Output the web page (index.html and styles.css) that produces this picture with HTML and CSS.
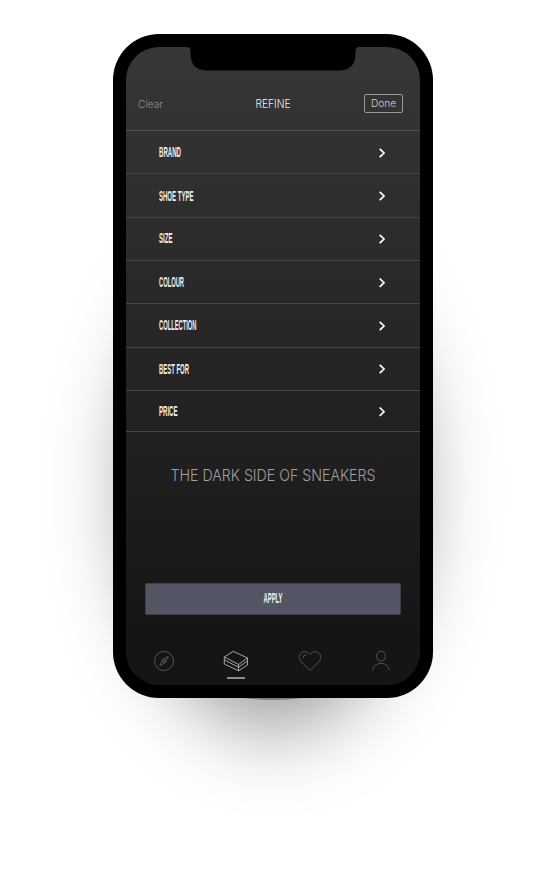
FILE: index.html
```html
<!DOCTYPE html>
<html lang="en">
<head>
<meta charset="utf-8">
<title>Refine</title>
<link rel="stylesheet" href="styles.css">
</head>
<body>
<main class="phone">
  <div class="screen">
    <svg class="notch" width="172" height="24" viewBox="0 0 172 24"><path d="M0 0H172Q168.500 0 168.500 4V6.500Q168.500 23.500 151.500 23.500H20.500Q3.500 23.500 3.500 6.500V4Q3.500 0 0 0Z"/></svg>
    <header class="header">
      <svg class="label clear" width="30" height="18"><text x="0" y="12.500" textLength="25" lengthAdjust="spacingAndGlyphs">Clear</text></svg>
      <svg class="label title" width="40" height="18"><text x="2.500" y="13" textLength="35" lengthAdjust="spacingAndGlyphs">REFINE</text></svg>
      <button class="done"><svg class="label" width="30" height="17"><text x="2" y="12" textLength="25" lengthAdjust="spacingAndGlyphs">Done</text></svg></button>
    </header>
    <ul class="filters">
      <li><svg class="narrow" width="80" height="20"><text y="15" textLength="22" lengthAdjust="spacingAndGlyphs">BRAND</text></svg><svg class="chevron" viewBox="0 0 8 12"><path d="M1.700 1.800L6 6L1.700 10.200"/></svg></li>
      <li><svg class="narrow" width="80" height="20"><text y="14.500" textLength="34.500" lengthAdjust="spacingAndGlyphs">SHOE TYPE</text></svg><svg class="chevron" viewBox="0 0 8 12"><path d="M1.700 1.800L6 6L1.700 10.200"/></svg></li>
      <li><svg class="narrow" width="80" height="20"><text y="14" textLength="13.500" lengthAdjust="spacingAndGlyphs">SIZE</text></svg><svg class="chevron" viewBox="0 0 8 12"><path d="M1.700 .8L6 5L1.700 9.200"/></svg></li>
      <li><svg class="narrow" width="80" height="20"><text y="15" textLength="25" lengthAdjust="spacingAndGlyphs">COLOUR</text></svg><svg class="chevron" viewBox="0 0 8 12"><path d="M1.700 1.500L6 5.700L1.700 9.900"/></svg></li>
      <li><svg class="narrow" width="80" height="20"><text y="15" textLength="37.500" lengthAdjust="spacingAndGlyphs">COLLECTION</text></svg><svg class="chevron" viewBox="0 0 8 12"><path d="M1.700 1.800L6 6L1.700 10.200"/></svg></li>
      <li><svg class="narrow" width="80" height="20"><text y="14.500" textLength="30" lengthAdjust="spacingAndGlyphs">BEST FOR</text></svg><svg class="chevron" viewBox="0 0 8 12"><path d="M1.700 1.800L6 6L1.700 10.200"/></svg></li>
      <li><svg class="narrow" width="80" height="20"><text y="15" textLength="18.500" lengthAdjust="spacingAndGlyphs">PRICE</text></svg><svg class="chevron" viewBox="0 0 8 12"><path d="M1.700 1.500L6 5.700L1.700 9.900"/></svg></li>
    </ul>
    <svg class="label tagline" width="240" height="24"><text x="17.500" y="17.500" textLength="205" lengthAdjust="spacingAndGlyphs">THE DARK SIDE OF SNEAKERS</text></svg>
    <button class="apply"><svg class="narrow" width="50" height="20"><text x="15.500" y="14" textLength="19" lengthAdjust="spacingAndGlyphs">APPLY</text></svg></button>
    <nav class="tabs">
      <svg class="icon compass" width="22" height="22" viewBox="0 0 22 22"><circle cx="11" cy="11" r="9.500"/><path d="M15.300 6.500L9.500 9.500L6.900 15.500L12.600 12.400Z"/><circle cx="11" cy="11" r="1.300"/></svg>
      <span class="active"><svg class="icon box" width="26" height="22" viewBox="0 0 26 22"><path d="M1.300 7L10.300 1.300L24.500 8L15.600 14.500ZM1.300 7V14L15.600 20.800L24.500 15V8M1.300 10L15.600 17.200L24.500 11M15.600 14.500V20.800"/></svg><i class="marker"></i></span>
      <svg class="icon heart" width="24" height="22" viewBox="0 0 24 22"><path d="M12 20.500L3.200 11.700C.8 9.300.8 6 2.500 3.800C5 .8 9.500.9 12 4.600C14.500.9 19 .8 21.500 3.800C23.200 6 23.200 9.300 20.800 11.700ZM5.100 8.300Q4.800 4.600 8.400 4.700"/></svg>
      <svg class="icon person" width="20" height="22" viewBox="0 0 20 22"><ellipse cx="10" cy="6.200" rx="4.400" ry="5"/><path d="M2 20.500C2.200 16 5.400 13.400 10 13.400S17.800 16 18 20.500"/></svg>
    </nav>
  </div>
</main>
</body>
</html>
```
FILE: styles.css
```css
* { box-sizing: border-box; }
body {
  margin: 0;
  height: 870px;
  padding-top: 34px;
  background: #fff;
  overflow: hidden;
}
.phone {
  position: relative;
  width: 320px;
  height: 664px;
  margin: 0 auto;
  padding: 13px;
  border-radius: 46px;
  background: #000;
}
/* soft floor shadow behind the device */
.phone::before {
  content: "";
  position: absolute;
  z-index: -1;
  left: 15px;
  top: 210px;
  width: 290px;
  height: 488px;
  border-radius: 50%;
  background: rgba(0, 0, 0, .38);
  filter: blur(40px);
}
.phone::after {
  content: "";
  position: absolute;
  z-index: -1;
  left: 80px;
  bottom: -2px;
  width: 160px;
  height: 50px;
  border-radius: 50%;
  background: #808080;
}
.screen {
  position: relative;
  display: flex;
  flex-direction: column;
  width: 294px;
  height: 638px;
  border-radius: 33px;
  overflow: hidden;
  background: linear-gradient(#373737, #151515 593px);
  will-change: opacity;
}
.notch {
  position: absolute;
  left: 61px;
  top: 0;
}
button { margin: 0; padding: 0; font: inherit; }
.header {
  display: grid;
  grid-template-columns: 1fr auto 1fr;
  align-items: center;
  height: 84px;
  padding: 30px 17px 0 12px;
  border-bottom: 1px solid #505050;
}
.label {
  display: block;
  overflow: visible;
  font-family: Inter, Lato, sans-serif;
  font-weight: 300;
  font-size: 10.500px;
  fill: #d0d0d0;
}
.clear { fill: #909090; }
.title { font-size: 12px; fill: #eee; margin-right: -5px; }
.done {
  justify-self: end;
  display: grid;
  place-items: center;
  width: 39px;
  height: 19px;
  border: 1px solid #999;
  border-radius: 2px;
  background: none;
}
.filters {
  display: grid;
  grid-template-rows: 43px 44px 43px 43px 43.500px 43.500px 41px;
  margin: 0;
  padding: 0;
  list-style: none;
}
.filters li {
  display: flex;
  align-items: center;
  justify-content: space-between;
  padding: 0 34px 0 33px;
  border-bottom: 1px solid #454545;
}
.narrow {
  display: block;
  overflow: visible;
  font-family: "Liberation Sans", sans-serif;
  font-weight: 700;
  font-size: 14px;
  fill: #eee;
}
.chevron {
  width: 8px;
  height: 12px;
  margin-top: 1px;
  fill: none;
  stroke: #fff;
  stroke-width: 1.700;
}
.tagline {
  align-self: center;
  margin-top: 31px;
  font-size: 16.500px;
  fill: #a0a0a0;
}
.apply {
  display: grid;
  place-items: center;
  height: 32px;
  margin: 96px 19px 0;
  border: 1px solid #3e3f4a;
  border-radius: 2px;
  background: #535564;
}
.tabs {
  display: flex;
  justify-content: space-between;
  height: 45px;
  margin-top: auto;
  padding: 10px 29px 0 27px;
  background: #151515;
}
.icon {
  display: block;
  fill: none;
  stroke: #646464;
  stroke-width: .8;
}
.active { display: grid; justify-items: center; align-content: start; gap: 5px; margin-left: -1px; }
.heart { margin-left: -1px; }
.box { stroke: #b5b5b5; stroke-width: .9; }
.marker { width: 18px; height: 2px; background: #8c8c8c; }
```
